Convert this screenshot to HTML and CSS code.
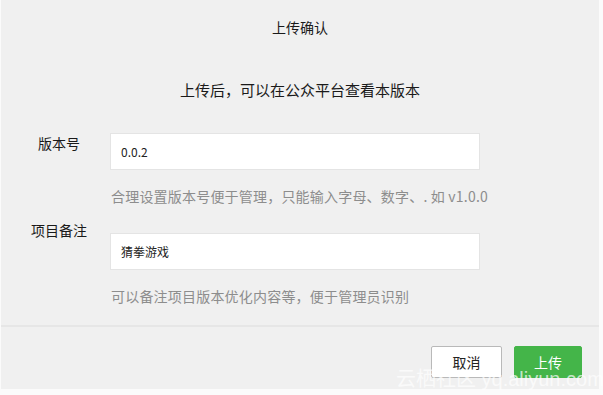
FILE: index.html
```html
<!DOCTYPE html>
<html lang="zh-CN">
<head>
<meta charset="utf-8">
<title>上传确认</title>
<link rel="stylesheet" href="styles.css">
</head>
<body>
<div class="dialog">
  <div class="dialog-header">上传确认</div>
  <div class="dialog-body">
    <p class="intro">上传后，可以在公众平台查看本版本</p>
    <div class="form-row">
      <label class="form-label">版本号</label>
      <div class="form-field">
        <div class="input">0.0.2</div>
        <p class="hint">合理设置版本号便于管理，只能输入字母、数字、. 如 v1.0.0</p>
      </div>
    </div>
    <div class="form-row form-row-second">
      <label class="form-label form-label-raised">项目备注</label>
      <div class="form-field">
        <div class="input">猜拳游戏</div>
        <p class="hint">可以备注项目版本优化内容等，便于管理员识别</p>
      </div>
    </div>
  </div>
  <div class="dialog-footer">
    <button class="btn btn-default">取消</button>
    <button class="btn btn-primary">上传</button>
    <span class="watermark">云栖社区 yq.aliyun.com</span>
  </div>
</div>
</body>
</html>
```
FILE: styles.css
```css
html, body {
  margin: 0;
  padding: 0;
  background: #fbfbfb;
}
body {
  width: 603px;
  height: 395px;
  font-family: "Noto Sans CJK SC", "Noto Sans", "Liberation Sans", sans-serif;
  color: #222;
  overflow: hidden;
}
.dialog {
  position: relative;
  margin-left: 1px;
  width: 598px;
  height: 389px;
  background: #f0f0f0;
  display: flex;
  flex-direction: column;
}
.dialog-header {
  padding-top: 16px;
  text-align: center;
  font-size: 14px;
  line-height: 22px;
  color: #1a1a1a;
}
.dialog-body {
  flex: 1;
}
.intro {
  margin: 41px 0 0;
  text-align: center;
  font-size: 15px;
  line-height: 22px;
  color: #1a1a1a;
}
.form-row {
  display: flex;
  margin-top: 32px;
  padding-left: 23px;
}
.form-row-second {
  margin-top: 27px;
}
.form-label {
  width: 70px;
  flex: none;
  text-align: center;
  font-size: 14px;
  line-height: 20px;
  color: #1a1a1a;
  margin-right: 16px;
}
.form-label-raised {
  margin-top: -13px;
}
.form-field {
  display: flex;
  flex-direction: column;
}
.input {
  width: 348px;
  height: 35px;
  padding: 0 10px;
  background: #fff;
  border: 1px solid #e4e4e4;
  font-size: 12px;
  line-height: 35px;
  color: #222;
}
.hint {
  margin: 16px 0 0 1px;
  font-size: 14px;
  line-height: 20px;
  color: #8d8d8d;
  white-space: nowrap;
  letter-spacing: 0.2px;
}
.dialog-footer {
  position: relative;
  height: 64px;
  border-top: 2px solid #e6e6e6;
  display: flex;
  justify-content: flex-end;
  align-items: flex-start;
  gap: 12px;
  padding: 19px 17px 0 0;
  box-sizing: border-box;
}
.btn {
  height: 32px;
  font-family: inherit;
  font-size: 14px;
  border-radius: 2px;
  padding: 0;
  cursor: pointer;
}
.btn-default {
  width: 71px;
  background: #fff;
  border: 1px solid #b9b9b9;
  color: #222;
}
.btn-primary {
  width: 68px;
  background: #44b549;
  border: 1px solid #44b549;
  color: #fff;
}
.watermark {
  position: absolute;
  left: 395px;
  top: 40px;
  font-family: "Liberation Sans", "Noto Sans CJK SC", sans-serif;
  font-size: 20px;
  line-height: 24px;
  color: rgba(255, 255, 255, 0.7);
  white-space: nowrap;
}
```
